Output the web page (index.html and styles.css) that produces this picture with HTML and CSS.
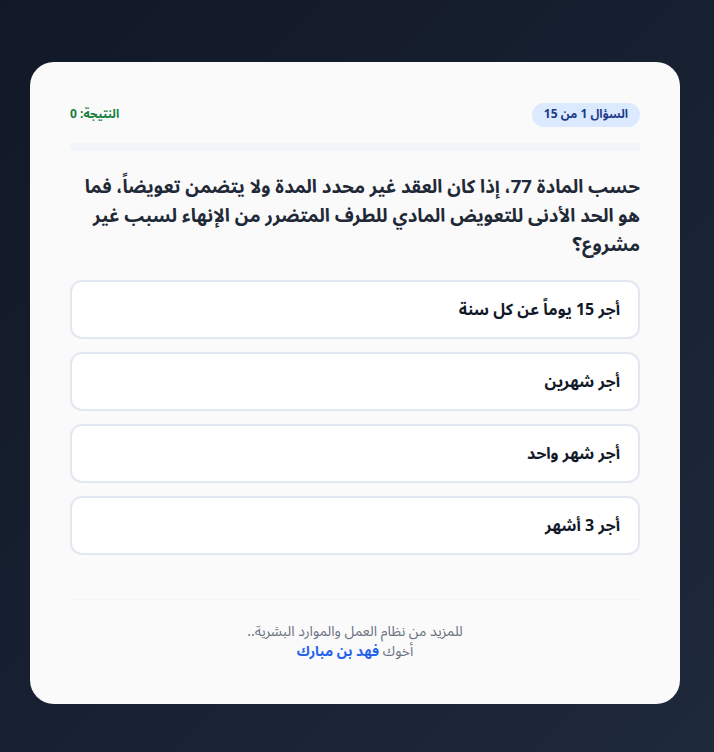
FILE: index.html
```html
<!DOCTYPE html>
<html lang="ar" dir="rtl">
<head>
    <meta charset="utf-8">
    <title>اختبار نظام العمل</title>
    <link rel="stylesheet" href="styles.css">
</head>
<body>
    <div class="card">
        <div class="top">
            <span class="counter">السؤال 1 من 15</span>
            <span class="score">النتيجة: 0</span>
        </div>

        <div class="progress"><div class="bar"></div></div>

        <div class="question">حسب المادة 77، إذا كان العقد غير محدد المدة ولا يتضمن تعويضاً، فما هو الحد الأدنى للتعويض المادي للطرف المتضرر من الإنهاء لسبب غير مشروع؟</div>

        <div class="options">
            <button class="option">أجر 15 يوماً عن كل سنة</button>
            <button class="option">أجر شهرين</button>
            <button class="option">أجر شهر واحد</button>
            <button class="option">أجر 3 أشهر</button>
        </div>

        <div class="footer">
            <p>للمزيد من نظام العمل والموارد البشرية..</p>
            <p>أخوك <strong>فهد بن مبارك</strong></p>
        </div>
    </div>
</body>
</html>
```

FILE: styles.css
```css
* {
    box-sizing: border-box;
}
body {
    margin: 0;
    min-height: 752px;
    padding: 62px 34px 40px 30px;
    font-family: "Noto Sans Arabic", "Noto Sans", sans-serif;
    background: linear-gradient(135deg, #111827 0%, #1e293b 100%);
}
.card {
    background: #fafafa;
    border-radius: 24px;
    padding: 40px 40px 42px;
}
.top {
    display: flex;
    justify-content: space-between;
    align-items: center;
}
.counter {
    background: #dbeafe;
    color: #1e3a8a;
    font-size: 12px;
    font-weight: bold;
    line-height: 16px;
    padding: 4px 12px;
    border-radius: 12px;
}
.score {
    color: #15803d;
    font-size: 12px;
    font-weight: bold;
}
.progress {
    margin-top: 16px;
    height: 8px;
    background: #f1f5f9;
    border-radius: 4px;
    overflow: hidden;
}
.bar {
    width: 0;
    height: 100%;
    background: #3b82f6;
}
.question {
    margin: 22px 0 20px;
    font-size: 18.6px;
    font-weight: bold;
    line-height: 29px;
    color: #1f2937;
}
.options {
    display: flex;
    flex-direction: column;
    gap: 13px;
}
.option {
    height: 59px;
    padding: 0 18px;
    text-align: right;
    font-family: inherit;
    font-size: 16px;
    font-weight: bold;
    color: #111827;
    background: white;
    border: 2px solid #e2e8f0;
    border-radius: 12px;
    cursor: pointer;
}
.footer {
    margin-top: 44px;
    padding-top: 22px;
    border-top: 1px solid #f1f5f9;
    text-align: center;
    font-size: 14px;
    color: #6b7280;
    line-height: 20px;
}
.footer p {
    margin: 0;
}
.footer strong {
    color: #2563eb;
}
```
